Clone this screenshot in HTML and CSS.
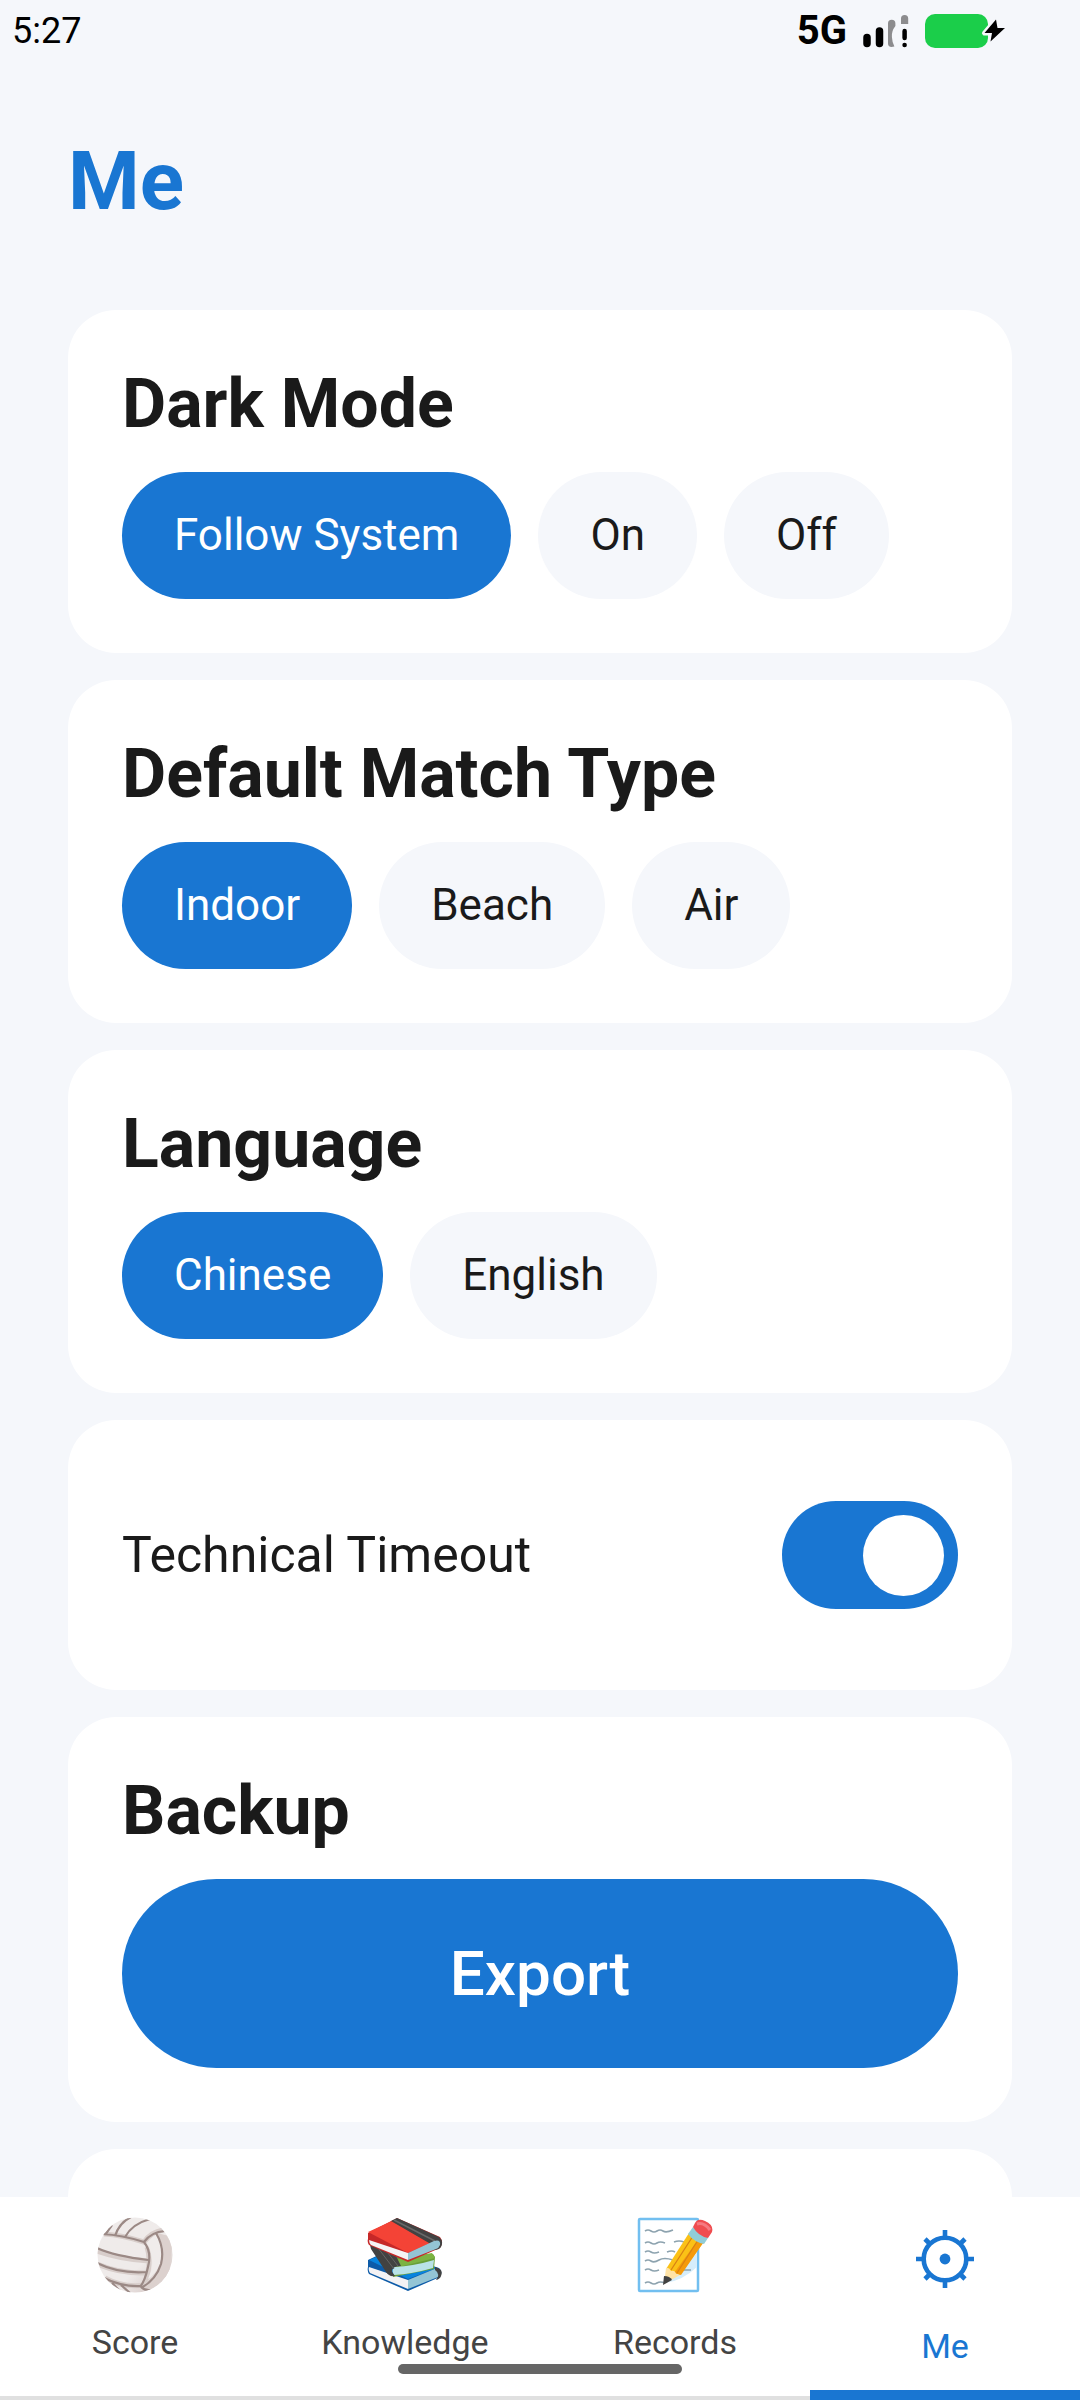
FILE: index.html
```html
<!DOCTYPE html>
<html lang="en">
<head>
<meta charset="utf-8">
<meta name="viewport" content="width=device-width, initial-scale=1">
<title>Me</title>
<link rel="stylesheet" href="styles.css">
</head>
<body>
<div class="app">
  <header class="status">
    <span class="status-time">5:27</span>
    <div class="status-icons">
      <span class="status-net">5G</span>
      <svg class="signal" viewBox="0 0 46 34" aria-hidden="true">
        <path d="M4 23.5V29.500M16.500 17V29.500" stroke="#000" stroke-width="7.500" stroke-linecap="round"/>
        <path d="M25 9.500a3.700 3.700 0 0 1 7.400 0v2.500q-4 5-3.500 11 .2 5 2.500 9.500-6.400 1.500-6.400-3z" fill="#8c8c8e"/>
        <path d="M38 10V4.500a3.600 3.600 0 0 1 7.200 0V10z" fill="#8c8c8e"/>
        <path d="M41.600 17V24" stroke="#000" stroke-width="4.500" stroke-linecap="round"/>
        <circle cx="41.600" cy="31" r="2.300"/>
      </svg>
      <svg class="battery" viewBox="0 0 80 34" aria-hidden="true">
        <rect width="63" height="34" rx="10" fill="#1bce4a"/>
        <path d="M71 5.500 59.500 19H67l-1.500 8.500L80 14H72.500z" fill="#000" stroke="#f5f7fb" stroke-width="5" stroke-linejoin="round" paint-order="stroke"/>
      </svg>
    </div>
  </header>

  <main class="content">
    <h1 class="title">Me</h1>

    <section class="card" role="radiogroup" aria-labelledby="dark-title">
      <h2 class="card-title" id="dark-title">Dark Mode</h2>
      <div class="chips">
        <label class="chip"><input type="radio" name="dark" checked>Follow System</label>
        <label class="chip"><input type="radio" name="dark">On</label>
        <label class="chip"><input type="radio" name="dark">Off</label>
      </div>
    </section>

    <section class="card" role="radiogroup" aria-labelledby="match-title">
      <h2 class="card-title" id="match-title">Default Match Type</h2>
      <div class="chips">
        <label class="chip"><input type="radio" name="match" checked>Indoor</label>
        <label class="chip"><input type="radio" name="match">Beach</label>
        <label class="chip"><input type="radio" name="match">Air</label>
      </div>
    </section>

    <section class="card" role="radiogroup" aria-labelledby="lang-title">
      <h2 class="card-title" id="lang-title">Language</h2>
      <div class="chips">
        <label class="chip"><input type="radio" name="lang" checked>Chinese</label>
        <label class="chip"><input type="radio" name="lang">English</label>
      </div>
    </section>

    <section class="card card-row">
      <label class="row-label" for="timeout">Technical Timeout</label>
      <input class="switch" type="checkbox" role="switch" id="timeout" checked>
    </section>

    <section class="card">
      <h2 class="card-title">Backup</h2>
      <button class="primary" type="button">Export</button>
    </section>

    <section class="card card-next"></section>
  </main>

  <nav class="tabs">
    <a class="tab" href="#score">
      <svg class="tab-icon" viewBox="0 0 76 76" aria-hidden="true">
        <defs>
          <clipPath id="ball"><circle cx="38" cy="38" r="37.500"/></clipPath>
          <linearGradient id="shade" x1="0" y1="0" x2="1" y2="1"><stop offset=".6" stop-color="#efebea"/><stop offset="1" stop-color="#cdbcb9"/></linearGradient>
        </defs>
        <g clip-path="url(#ball)" fill="none">
          <rect width="76" height="76" fill="url(#shade)"/>
          <path d="M7 17Q25 18 47 25Q54 15 66 13" stroke="#d8cecb" stroke-width="5"/>
          <path d="M0 34Q22 42 52 44M0 47Q24 57 50 56M8 61Q26 71 48 68M50 30Q55 45 48 66" stroke="#d8cecb" stroke-width="5"/>
          <path d="M60 16Q73 38 58 62L45 71 70 76 76 20z" fill="#dcd1ce"/>
          <path d="M61 18Q68 33 63 47 58 58 51 62 59 46 52 30 50 24 60 17z" fill="#f0eceb"/>
          <path d="M5 17Q25 18 47 25Q54 15 68 14M8 18 15 8M18 19Q22 6 34 0M28 20Q35 7 53 2M47 25Q55 35 51 50 48 64 43 70M59 16Q68 31 64 47 59 63 44 71M0 31Q18 39 51 43M0 46Q22 57 50 55M7 61Q25 70 44 69M15 66 23 74M24 68 33 76M44 70Q48 74 54 73" stroke="#9b8985" stroke-width="2.200"/>
        </g>
      </svg>
      <span>Score</span>
    </a>
    <a class="tab" href="#knowledge">
      <svg class="tab-icon" viewBox="0 0 76 76" aria-hidden="true">
        <path d="M1 43 20 34 72 51Q76 54 73 60L41 74 2 57Q0 54 1 50z" fill="#0d5ba8"/>
        <path d="M2 43 21 35 70 51 41 62z" fill="#0884de"/>
        <path d="M2 50 41 63V72L3 56Q1 53 2 50z" fill="#f3f2f4"/>
        <path d="M41 63 70 51Q75 55 71 60L41 72z" fill="#94c5d5"/>
        <path d="M68 50Q77 52 74 59 73 62 69 63 74 57 68 53z" fill="#424242"/>
        <path d="M30 40 66 37 68 40 67 52 26 60z" fill="#689f38"/>
        <path d="M31 42 65 36 68 41 32 50z" fill="#7cb342"/>
        <path d="M27 50Q47 49 67 43L66 51Q45 57 27 58 24 54 27 50z" fill="#b9e2e7"/>
        <path d="M3 28 26 33 34 49Q24 49 25 55L28 59Q22 60 19 55L4 32z" fill="#424242"/>
        <path d="M11 31 27 52M17 31 31 49" stroke="#646464" stroke-width="1"/>
        <path d="M1 16 30 1 73 20Q77 25 73 31L41 45 2 28Q0 25 1 22z" fill="#c62828"/>
        <path d="M1 15 25 4 63 26 41 36z" fill="#f44336"/>
        <path d="M24 4 30 1 72 20Q77 24 74 30 72 33 67 33L62 26z" fill="#424242"/>
        <path d="M27 3 68 24" stroke="#686868" stroke-width="1.500"/>
        <path d="M2 23 41 36V43L4 28Q2 26 2 23z" fill="#f5f3f5"/>
        <path d="M41 36 67 24Q74 22 73 28 72 31 69 32L41 43z" fill="#94c5d5"/>
      </svg>
      <span>Knowledge</span>
    </a>
    <a class="tab" href="#records">
      <svg class="tab-icon" viewBox="0 0 76 76" aria-hidden="true">
        <rect x="2" y="2" width="59" height="72" rx="1" fill="#fff" stroke="#72bff0" stroke-width="2.500"/>
        <path d="M28 66 60 36V50Q45 64 28 66z" fill="#d5edfb"/>
        <path d="M8 14q3-2 6 0t6 0 6 0 10-1M8 26q3-2 6 0t6 0 8 0M37 25q5-2 10 0M8 35q3-2 6 0t8 0M30 35q5-2 8 0M8 44q3-2 6 0t8-1 14 0M8 53q3-2 6 0t8 0M46 53h8M8 66q3-2 6 0t6 0 8 0" fill="none" stroke="#8da3af" stroke-width="1.700"/>
        <path d="M52 16 66 26 43 58 29 52z" fill="#fbc116"/>
        <path d="M61 23 66 26 44 58 37 56z" fill="#f59a0b"/>
        <path d="M56 19 34 53M61 23 40 56" stroke="#d98213" stroke-width="1.300"/>
        <path d="M29 51Q32 50 34 54 38 53 39 57L43 58 27 67z" fill="#ffe3a6"/>
        <path d="M27 59Q33 59 35 63L26 68z" fill="#424242"/>
        <path d="M56 10 71 21 67 27Q57 25 51 17z" fill="#90cdd8"/>
        <path d="M57 8Q60 0 68 4 77 8 75 15L71 21Q61 19 56 10z" fill="#ef4d50"/>
        <path d="M60 7Q67 5 73 13" fill="none" stroke="#f67980" stroke-width="3"/>
      </svg>
      <span>Records</span>
    </a>
    <a class="tab tab-active" href="#me" aria-current="page">
      <svg class="tab-icon" viewBox="0 0 76 76" aria-hidden="true" fill="none" stroke="currentColor" stroke-width="4.600">
        <circle cx="38" cy="38" r="21.300"/>
        <circle cx="38" cy="38" r="5.400" fill="currentColor" stroke="none"/>
        <path d="M38 9V17M38 59V67M9 38H17M59 38H67M18 18 24 24M58 18 52 24M18 58 24 52M58 58 52 52"/>
      </svg>
      <span>Me</span>
    </a>
    <div class="home-bar"></div>
  </nav>
</div>
</body>
</html>
```
FILE: styles.css
```css
:root {
  --blue: #1976d2;
  --page: #f5f7fb;
  --ink: #1a1a1a;
  --gap: 27px;
}

* {
  box-sizing: border-box;
}

body {
  margin: 0;
  background: var(--page);
  color: var(--ink);
  font-family: Roboto, sans-serif;
}

.app {
  display: flex;
  flex-direction: column;
  height: 100vh;
}

/* Status bar */
.status {
  display: flex;
  flex: none;
  align-items: center;
  justify-content: space-between;
  height: 62px;
  padding: 0 75px 0 12px;
  color: #000;
}

.status-time {
  font-size: 36px;
}

.status-icons {
  display: flex;
  align-items: center;
  gap: 16px;
}

.status-net {
  font-size: 40px;
  font-weight: 700;
  line-height: 48px;
}

.signal {
  width: 46px;
  height: 34px;
}

.battery {
  width: 80px;
  height: 34px;
  overflow: visible;
}

/* Settings list */
.content {
  display: flex;
  flex: 1;
  flex-direction: column;
  gap: var(--gap);
  min-height: 0;
  padding: 72px 68px 0;
  overflow-y: auto;
  scrollbar-width: none;
}

.title {
  margin: 0 0 54px;
  color: var(--blue);
  font-size: 82px;
  font-weight: 700;
  line-height: 95px;
}

.card {
  display: flex;
  flex: none;
  flex-direction: column;
  gap: var(--gap);
  padding: 54px;
  border-radius: 48px;
  background: #fff;
}

.card-title {
  margin: 0;
  font-size: 68px;
  font-weight: 700;
  line-height: 81px;
}

.chips {
  display: flex;
  flex-wrap: wrap;
  gap: var(--gap);
}

.chip {
  padding: 38px 52px;
  border-radius: 64px;
  background: var(--page);
  font-size: 44px;
  line-height: 51px;
}

.chip input {
  width: 0;
  height: 0;
  margin: 0;
  appearance: none;
  float: left;
}

.chip:has(input:checked) {
  background: var(--blue);
  color: #fff;
}

.card-row {
  flex-direction: row;
  align-items: center;
  justify-content: space-between;
  padding: 81px 54px;
}

.row-label {
  font-size: 50px;
}

.switch {
  display: flex;
  align-items: center;
  justify-content: flex-start;
  width: 176px;
  height: 108px;
  margin: 0;
  padding: 14px;
  border-radius: 54px;
  background: #bbb;
  appearance: none;
}

.switch::before {
  width: 81px;
  height: 81px;
  border-radius: 50%;
  background: #fff;
  content: "";
}

.switch:checked {
  justify-content: flex-end;
  background: var(--blue);
}

.primary {
  padding: 54px;
  border: 0;
  border-radius: 95px;
  background: var(--blue);
  color: #fff;
  font-family: inherit;
  font-size: 62px;
  font-weight: 500;
  line-height: 81px;
}

.card-next {
  min-height: 343px;
}

/* Bottom tabs */
.tabs {
  position: relative;
  display: grid;
  flex: none;
  grid-template-columns: repeat(4, 1fr);
  height: 203px;
  background: #fff;
}

.tab {
  display: flex;
  flex-direction: column;
  align-items: center;
  gap: 29px;
  padding-top: 20px;
  border-bottom: 4px solid #e0e0e0;
  color: #444;
  font-size: 34px;
  line-height: 40px;
  text-decoration: none;
}

.tab-icon {
  width: 76px;
  height: 76px;
}

.tab-active {
  padding-top: 24px;
  border-bottom: 10px solid var(--blue);
  color: var(--blue);
}

.home-bar {
  position: absolute;
  bottom: 26px;
  left: 50%;
  width: 284px;
  height: 10px;
  border-radius: 5px;
  background: #666;
  transform: translateX(-50%);
}
```
